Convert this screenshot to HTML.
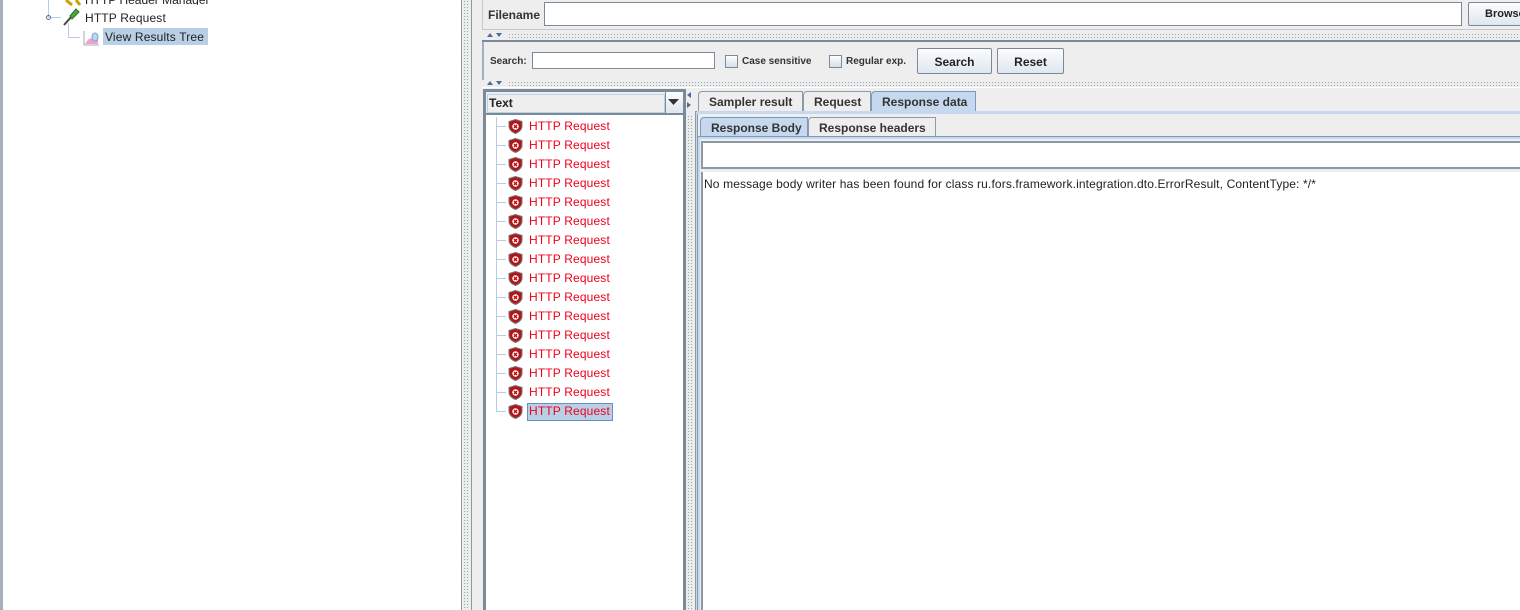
<!DOCTYPE html>
<html><head><meta charset="utf-8"><style>
*{margin:0;padding:0;box-sizing:border-box}
body{width:1520px;height:610px;overflow:hidden;background:#eeeeee;font-family:"Liberation Sans",sans-serif;font-size:12px;color:#333;position:relative}
.a{position:absolute}
.dots{background-image:radial-gradient(#9aa 0.7px,transparent 0.8px);background-size:3px 3px}
.btn{border:1px solid #7a8a99;border-radius:2px;background:linear-gradient(#fbfcfd,#dfe7f0);font-weight:bold;font-size:12px;text-align:center;color:#222}
.cb{width:13px;height:13px;border:1px solid #7a8a99;background:linear-gradient(#fff,#d6dfe9)}
.lbl{font-weight:bold;font-size:10px;color:#333}
.row{position:absolute;left:0;height:19px;width:200px}
.row .ln{position:absolute;left:10px;top:9px;width:10px;border-top:1px solid #b8cbe0}
.row .ic{position:absolute;left:22px;top:2px;width:15px;height:15px}
.row .t{position:absolute;left:43px;top:2px;color:#f0001c;font-size:12px;letter-spacing:0.15px}
.tab{position:absolute;height:20px;border:1px solid #8c9aa8;border-bottom:none;font-weight:bold;font-size:12px;padding:3px 0 0 10px;background:#eeeeee;border-radius:4px 0 0 0;color:#333}
</style></head><body>
<div class="a" style="left:0;top:0;width:3px;height:610px;background:#a9b1b8"></div>
<div class="a" style="left:3px;top:0;width:458px;height:610px;background:#fff"></div>
<div class="a" style="left:48px;top:0;height:18px;border-left:1px solid #b8cbe0"></div>
<div class="a" style="left:46px;top:15px;width:5px;height:5px;border:1px solid #4a6d95;border-radius:50%"></div>
<div class="a" style="left:51px;top:17px;width:10px;border-top:1px solid #b8cbe0"></div>
<div class="a" style="left:68px;top:23px;width:1px;height:15px;background:#b8cbe0"></div>
<div class="a" style="left:68px;top:37px;width:12px;border-top:1px solid #b8cbe0"></div>
<svg class="a" style="left:62px;top:0" width="20" height="6"><path d="M4 0 L10 5 M14 0 L18 5" stroke="#c9a100" stroke-width="3"/></svg>
<svg class="a" style="left:61px;top:7px" width="20" height="20"><path d="M3 18 L11 9" stroke="#444" stroke-width="2"/><path d="M9 9 L15 2 L18 5 L11 12 Z" fill="#4caa3c" stroke="#2a6a20"/></svg>
<div class="a" style="left:85px;top:11px;color:#222;letter-spacing:0.15px">HTTP Request</div>
<div class="a" style="left:85px;top:0;height:5px;overflow:hidden;color:#222;line-height:0">HTTP Header Manager</div>
<svg class="a" style="left:82px;top:29px" width="18" height="18"><path d="M2 2 V16 H17" stroke="#aaa" fill="none"/><path d="M3 15 Q8 6 11 11 Q13 8 16 11 V15 Z" fill="#f0a0d8"/><ellipse cx="13" cy="8" rx="3" ry="4" fill="#bcd8f0" stroke="#7aa0c8"/></svg>
<div class="a" style="left:103px;top:28px;width:105px;height:17px;background:#b8cfe5"></div>
<div class="a" style="left:105px;top:30px;color:#222;letter-spacing:0.15px">View Results Tree</div>

<div class="a" style="left:461px;top:0;width:1px;height:610px;background:#8c98a4"></div>
<div class="a dots" style="left:463px;top:0;width:7px;height:610px"></div>
<div class="a" style="left:471px;top:0;width:1px;height:610px;background:#8c98a4"></div>

<div class="a" style="left:482px;top:0;width:1px;height:30px;background:#c4c8cc"></div>
<div class="a" style="left:482px;top:29px;width:1040px;height:1px;background:#c4c8cc"></div>
<div class="a" style="left:488px;top:8px;font-weight:bold;font-size:12px">Filename</div>
<div class="a" style="left:544px;top:2px;width:918px;height:24px;background:#fff;border:1px solid #7a8a99"></div>
<div class="a btn" style="left:1468px;top:2px;width:60px;height:24px;padding-top:5px;font-size:11px;text-align:left;padding-left:16px">Browse</div>

<svg class="a" style="left:486px;top:32px" width="22" height="6"><path d="M1 5 L4 1 L7 5Z M10 1 L16 1 L13 5Z" fill="#4a6d95"/></svg>
<div class="a dots" style="left:508px;top:33px;width:1012px;height:5px"></div>
<div class="a" style="left:482px;top:40px;width:1040px;height:2px;background:#7a8a99"></div>
<div class="a" style="left:482px;top:42px;width:2px;height:38px;background:#a6b0ba"></div>
<div class="a lbl" style="left:490px;top:56px">Search:</div>
<div class="a" style="left:532px;top:52px;width:183px;height:17px;background:#fff;border:1px solid #7a8a99"></div>
<div class="a cb" style="left:725px;top:55px"></div>
<div class="a lbl" style="left:742px;top:56px">Case sensitive</div>
<div class="a cb" style="left:829px;top:55px"></div>
<div class="a lbl" style="left:846px;top:56px">Regular exp.</div>
<div class="a btn" style="left:917px;top:48px;width:75px;height:26px;padding-top:6px">Search</div>
<div class="a btn" style="left:997px;top:48px;width:67px;height:26px;padding-top:6px">Reset</div>

<svg class="a" style="left:486px;top:80px" width="22" height="6"><path d="M1 5 L4 1 L7 5Z M10 1 L16 1 L13 5Z" fill="#4a6d95"/></svg>
<div class="a dots" style="left:508px;top:81px;width:1012px;height:5px"></div>
<div class="a" style="left:482px;top:87px;width:1040px;height:1px;background:#fff"></div>

<div class="a" style="left:483px;top:89px;width:203px;height:521px;border:3px solid #7a8a99;border-bottom:none;background:#fff"></div>
<div class="a" style="left:486px;top:92px;width:197px;height:23px;background:#eeeeee;border-bottom:2px solid #7a8a99"></div>
<div class="a" style="left:487px;top:94px;width:178px;height:19px;border:1px solid #b8cfe5"></div>
<div class="a" style="left:489px;top:96px;font-size:12px;font-weight:bold;color:#222">Text</div>
<div class="a" style="left:665px;top:92px;width:18px;height:21px;background:linear-gradient(#fbfcfd,#dfe7f0);border-left:1px solid #7a8a99"></div>
<svg class="a" style="left:668px;top:99px" width="12" height="8"><path d="M0 0 H11 L5.5 6Z" fill="#333"/></svg>
<div class="a" id="list" style="left:486px;top:117px;width:197px;height:493px"></div>

<svg class="a" style="left:686px;top:91px" width="6" height="22"><path d="M5 1 L1 4 L5 7Z M1 11 L5 14 L1 17Z" fill="#4a6d95"/></svg>
<div class="a dots" style="left:687px;top:115px;width:6px;height:495px"></div>

<div class="a" style="left:695px;top:111px;width:830px;height:499px;border-left:1px solid #8c9aa8;border-top:1px solid #8c9aa8;background:#c5d8ee"></div>
<div class="tab" style="left:698px;top:91px;width:105px">Sampler result</div>
<div class="tab" style="left:803px;top:91px;width:68px">Request</div>
<div class="tab" style="left:871px;top:91px;width:105px;background:#c5d8ee;border-color:#7a98c0">Response data</div>
<div class="a" style="left:697px;top:113px;width:830px;height:497px;background:#eeeeee;border-left:1px solid #8c9aa8"></div>
<div class="a" style="left:697px;top:111px;width:830px;height:3px;background:#c5d8ee"></div>
<div class="tab" style="left:700px;top:117px;width:108px;background:#c5d8ee;border-color:#7a98c0">Response Body</div>
<div class="tab" style="left:808px;top:117px;width:128px">Response headers</div>
<div class="a" style="left:698px;top:136px;width:830px;height:3px;background:#c5d8ee;border-top:1px solid #7a98c0"></div>
<div class="a" style="left:698px;top:139px;width:830px;height:471px;background:#eeeeee;border-left:2px solid #c5d8ee"></div>
<div class="a" style="left:701px;top:141px;width:830px;height:28px;background:#fff;border:2px solid #8c9aa8"></div>
<div class="a" style="left:701px;top:172px;width:830px;height:438px;background:#fff;border-left:2px solid #8c9aa8"></div>
<div class="a" style="left:704px;top:177px;font-size:12px;color:#222;letter-spacing:0.13px">No message body writer has been found for class ru.fors.framework.integration.dto.ErrorResult, ContentType: */*</div>

<script>
var l=document.getElementById('list'),h='';
for(var i=0;i<16;i++){
h+='<div class="row" style="top:'+(i*19)+'px"><div class="ln"></div>'+(i<15?'<div style="position:absolute;left:10px;top:0;height:19px;border-left:1px solid #b8cbe0"></div>':'<div style="position:absolute;left:10px;top:0;height:10px;border-left:1px solid #b8cbe0"></div>')+
'<svg class="ic" viewBox="0 0 15 15"><path d="M7.5 0.5 L14 2.5 V7 Q14 12 7.5 14.5 Q1 12 1 7 V2.5Z" fill="#b0151a" stroke="#777"/><circle cx="7.5" cy="7.5" r="3.2" fill="#fff"/><path d="M6 6 L9 9 M9 6 L6 9" stroke="#c00" stroke-width="1.4"/></svg>'+
(i==15?'<div style="position:absolute;left:41px;top:1px;width:86px;height:18px;background:#b8cfe5;border:1px solid #6a8ccc"></div>':'')+
'<div class="t">HTTP Request</div></div>';}
l.innerHTML=h;
</script>
</body></html>
